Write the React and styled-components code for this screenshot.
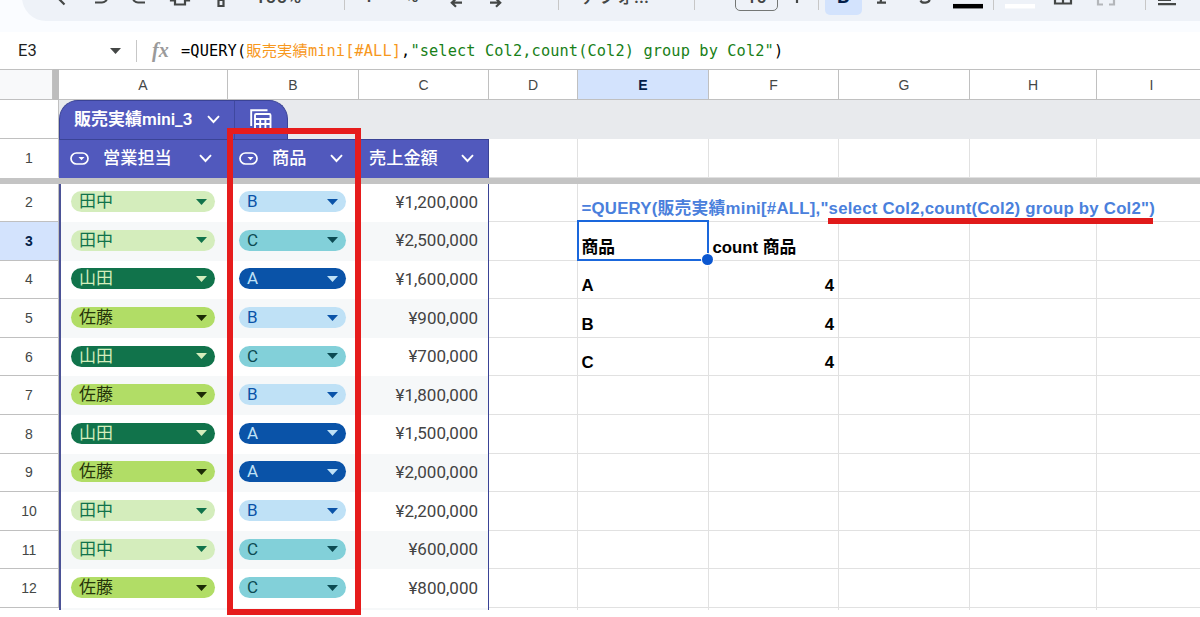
import React from 'react';
import styled, { createGlobalStyle, css } from 'styled-components';

const GlobalStyle = createGlobalStyle`
  *, *::before, *::after { box-sizing: border-box; }
  html, body { margin: 0; padding: 0; background: #fff; overflow: hidden; }
`;

const Page = styled.div`
  width: 1200px;
  height: 617px;
  overflow: hidden;
  position: relative;
  background: #fff;
  font-family: Roboto, "Noto Sans CJK JP", sans-serif;
`;

const ToolbarArea = styled.div`
  height: 32px;
  overflow: hidden;
  padding-left: 22px;
  background: #fafcff;
`;

const Toolbar = styled.div`
  display: flex;
  align-items: center;
  width: 1230px;
  height: 48px;
  margin-top: -27px;
  padding-left: 22px;
  border-radius: 24px;
  background: #eef2f8;
`;

const Tool = styled.div`
  flex: none;
  display: flex;
  align-items: center;
  justify-content: center;
  width: ${(p) => p.$w}px;
  height: 36px;
  padding-bottom: ${(p) => p.$lift || 0}px;
  border-radius: 5px;
  background: ${(p) => (p.$active ? '#d3e3fd' : 'transparent')};
  color: ${(p) => (p.$active ? '#041e49' : '#444746')};
  font-size: ${(p) => p.$size || 18}px;
  font-weight: ${(p) => (p.$bold ? 700 : 500)};
  white-space: nowrap;
`;

const Gap = styled.div`
  flex: none;
  width: ${(p) => p.$w}px;
`;

const Rule = styled.div`
  flex: none;
  width: 1px;
  height: 25px;
  background: #c7c7c7;
`;

const SizeBox = styled.div`
  flex: none;
  display: flex;
  align-items: center;
  justify-content: center;
  width: 43px;
  height: 28px;
  padding-bottom: 2px;
  border: 1px solid #747775;
  border-radius: 5px;
  color: #444746;
  font-size: 18px;
  font-weight: 500;
`;

const FormulaBar = styled.div`
  display: flex;
  align-items: center;
  height: 37px;
  padding-left: 18px;
`;

const NameBox = styled.div`
  display: flex;
  align-items: center;
  justify-content: space-between;
  width: 119px;
  height: 22px;
  padding-right: 15px;
  border-right: 1px solid #c7c7c7;
  font-size: 16.5px;
  color: #1f1f1f;
`;

const Fx = styled.div`
  width: 29px;
  margin: 0 0 0 15px;
  font: italic 700 20px "Liberation Serif", serif;
  color: #9a9a9a;
`;

const Formula = styled.div`
  font-family: "DejaVu Sans Mono", "Noto Sans CJK JP", monospace;
  font-size: 15.3px;
  line-height: 22px;
  letter-spacing: 0.11px;
  white-space: pre;
  color: #000;
`;

const Tint = styled.span`
  color: ${(p) => p.$c};
`;

const columns = '53px 6px 169px 131px 130px 89px 131px 130px 131px 127px 110px';

const Row = styled.div`
  display: grid;
  grid-template-columns: ${columns};
  width: 1207px;
  height: ${(p) => p.$h}px;
`;

const ColHead = styled.div`
  display: flex;
  align-items: center;
  justify-content: center;
  border: solid #c0c0c0;
  border-width: 1px 1px 1px 0;
  background: ${(p) => (p.$on ? '#d3e3fd' : p.$corner ? '#f8f9fa' : '#fff')};
  color: ${(p) => (p.$on ? '#041e49' : '#444746')};
  font: ${(p) => (p.$on ? 700 : 400)} 14px "Liberation Sans", sans-serif;
`;

const RowHead = styled.div`
  grid-column: 1 / 3;
  display: flex;
  align-items: center;
  justify-content: center;
  border-right: 1px solid #c0c0c0;
  border-bottom: 1px solid ${(p) => (p.$frozen ? '#fff' : '#c0c0c0')};
  background: ${(p) => (p.$on ? '#d3e3fd' : '#fff')};
  color: ${(p) => (p.$on ? '#041e49' : '#444746')};
  font: ${(p) => (p.$on ? 700 : 400)} 14px "Liberation Sans", sans-serif;
`;

const FreezeV = styled.div`
  background: #bdbdbd;
`;

const FreezeH = styled.div`
  height: 6px;
  background: #c4c4c4;
`;

const Cell = styled.div`
  display: flex;
  align-items: flex-end;
  justify-content: ${(p) => (p.$right ? 'flex-end' : 'flex-start')};
  grid-column: span ${(p) => p.$span || 1};
  padding: 0 4px 0 3.5px;
  border: solid #e1e1e1;
  border-width: 0 1px ${(p) => (p.$stub ? 0 : 1)}px 0;
  color: ${(p) => p.$color || '#000'};
  font: 700 16.8px/24px "Liberation Sans", "Noto Sans CJK JP", sans-serif;
  letter-spacing: ${(p) => p.$ls || 0}px;
  white-space: nowrap;
  position: relative;
`;

const TabRow = styled(Row)`
  background: linear-gradient(to right, #fff 59px, #e8eaed 59px);
`;

const TableTab = styled.div`
  grid-column: 3 / 5;
  display: flex;
  width: 229px;
  border: 1px solid #3a4396;
  border-bottom: 0;
  border-radius: 19px 19px 0 0;
  background: #5159bd;
  color: #fff;
`;

const TabName = styled.div`
  display: flex;
  align-items: center;
  justify-content: space-between;
  width: 175px;
  padding: 0 14px 4px 14px;
  border-right: 1px solid #3f489f;
  font-size: 17px;
  font-weight: 600;
  white-space: nowrap;

  svg {
    margin-top: 4px;
  }
`;

const TabIcon = styled.div`
  display: flex;
  flex: 1;
  align-items: center;
  justify-content: center;
`;

const HeaderCell = styled.div`
  display: flex;
  align-items: center;
  padding: 0 ${(p) => p.$pr}px 4px ${(p) => p.$pl}px;
  border-top: 1px solid #3a4396;
  ${(p) => p.$last && css`border-right: 1px solid #3a4396;`}
  background: #5159bd;
  color: #fff;
  font-size: 17.2px;
  font-weight: 500;
  white-space: nowrap;

  svg {
    margin-top: 3px;
  }
`;

const HeaderText = styled.span`
  flex: 1;
  margin-left: ${(p) => p.$ml}px;
`;

const DataCell = styled.div`
  display: flex;
  align-items: center;
  justify-content: ${(p) => (p.$money ? 'flex-end' : 'flex-start')};
  padding: 0 ${(p) => (p.$money ? 10 : 11)}px 2px;
  background: ${(p) => (p.$alt ? '#f6f8f9' : '#fff')};
  ${(p) => p.$first && css`border-left: 2px solid #4b5296; padding-left: 10px;`}
  ${(p) => p.$money && css`border-right: 1px solid #3a4396;`}
  color: #434343;
  font-size: 17px;
`;

const Chip = styled.div`
  display: flex;
  align-items: center;
  justify-content: space-between;
  width: ${(p) => p.$w}px;
  height: 21px;
  padding: 0 8px;
  border-radius: 11px;
  background: ${(p) => p.$bg};
  color: ${(p) => p.$fg};
  font-size: 17px;
  line-height: 21px;
`;

const Selection = styled.div`
  position: absolute;
  left: -1px;
  top: -2px;
  right: -1px;
  bottom: -1px;
  border: 2px solid #1a67dc;
  &::after {
    content: '';
    position: absolute;
    right: -6px;
    bottom: -6px;
    width: 11px;
    height: 11px;
    border-radius: 50%;
    background: #0b57d0;
    box-shadow: 0 0 0 1px #fff;
    z-index: 2;
  }
`;

const SelectedCell = styled(Cell)`
  z-index: 1;
`;

const HighlightBox = styled.div`
  position: absolute;
  z-index: 3;
  left: 227px;
  top: 128px;
  width: 134px;
  height: 487px;
  border: 6px solid #e61c1c;
`;

const Underline = styled.div`
  position: absolute;
  z-index: 3;
  left: 828px;
  top: 218px;
  width: 325px;
  height: 6px;
  background: #e01a1a;
`;

const Caret = ({ color = '#444746' }) => (
  <svg width="11" height="6" viewBox="0 0 11 6"><path d="M0 0h11L5.5 6z" fill={color} /></svg>
);
const Chevron = () => (
  <svg width="13" height="9" viewBox="0 0 13 9"><path d="M1 1.2l5.5 5.8L12 1.2" fill="none" stroke="#fff" strokeWidth="1.9" /></svg>
);
const DropdownType = () => (
  <svg width="19" height="13" viewBox="0 0 19 13">
    <rect x="1" y="1" width="17" height="11" rx="5.5" fill="none" stroke="#fff" strokeWidth="1.7" />
    <path d="M8.5 5h6l-3 3.2z" fill="#fff" />
  </svg>
);
const TableIcon = () => (
  <svg width="22" height="22" viewBox="0 0 22 22" fill="none" stroke="#fff" strokeWidth="1.9">
    <path d="M1.200 17V1.200H17.500" />
    <rect x="5" y="5" width="15.500" height="15.500" rx="1.200" />
    <path d="M5 10h15.500M5 15h15.500M10.200 10v10.500M15.400 10v10.500" />
  </svg>
);
const Icon = ({ children, w = 24, c = '#444746' }) => (
  <svg width={w} height="24" viewBox={`0 0 ${w} 24`} fill="none" stroke={c} strokeWidth="2.2">{children}</svg>
);

const NAMES = {
  田中: ['#d4edbc', '#11734b', '#11734b'],
  山田: ['#11734b', '#d4edbc', '#d4edbc'],
  佐藤: ['#b1dd66', '#26350a', '#1c2b05'],
};
const GOODS = {
  A: ['#0a53a8', '#bfe1f6'],
  B: ['#bfe1f6', '#0a53a8'],
  C: ['#82d0d9', '#0b4a52'],
};

const rows = [
  ['田中', 'B', '¥1,200,000'],
  ['田中', 'C', '¥2,500,000'],
  ['山田', 'A', '¥1,600,000'],
  ['佐藤', 'B', '¥900,000'],
  ['山田', 'C', '¥700,000'],
  ['佐藤', 'B', '¥1,800,000'],
  ['山田', 'A', '¥1,500,000'],
  ['佐藤', 'A', '¥2,000,000'],
  ['田中', 'B', '¥2,200,000'],
  ['田中', 'C', '¥600,000'],
  ['佐藤', 'C', '¥800,000'],
];

const results = {
  3: ['商品', 'count 商品'],
  4: ['A', '4'],
  5: ['B', '4'],
  6: ['C', '4'],
};

function SheetCells({ n }) {
  if (n === 2) {
    return (
      <>
        <Cell />
        <Cell $span={5} $color="#4a80dc" $ls={0.23}>=QUERY(販売実績mini[#ALL],"select Col2,count(Col2) group by Col2")</Cell>
      </>
    );
  }
  const [e, f] = results[n] || [];
  return (
    <>
      <Cell />
      {n === 3 ? <SelectedCell>{e}<Selection /></SelectedCell> : <Cell>{e}</Cell>}
      <Cell $right={n > 3}>{f}</Cell>
      <Cell /><Cell /><Cell />
    </>
  );
}

export default function App() {
  return (
    <Page>
      <GlobalStyle />
      <ToolbarArea>
        <Toolbar>
          <Tool $w={24}><Icon><circle cx="9" cy="8" r="6" /><path d="M12.500 11.500l8 8" /></Icon></Tool>
          <Gap $w={20} />
          <Tool $w={24}><Icon><path d="M7 17.500h7a5 5 0 0 0 0-10H4M8 3L4 7.500l4 4.500" /></Icon></Tool>
          <Gap $w={15} />
          <Tool $w={24}><Icon><path d="M18 17.500h-7a5 5 0 0 1 0-10h10M17 3l4 4.500l-4 4.500" /></Icon></Tool>
          <Gap $w={17} />
          <Tool $w={24}><Icon><path d="M7 15.500H3V8h18v7.500h-4M7 13h10v6.500H7zM7 8V3h10v5" /></Icon></Tool>
          <Gap $w={17} />
          <Tool $w={24}><Icon><path d="M4 3h14v6H4zM18 6h3v6h-9v3M9.500 15h5v6h-5z" /></Icon></Tool>
          <Gap $w={20} />
          <Tool $w={50} $size={19} $lift={1}>100%</Tool>
          <Gap $w={41} />
          <Rule />
          <Gap $w={14} />
          <Tool $w={20} $lift={4}>¥</Tool>
          <Gap $w={21} />
          <Tool $w={24} $lift={4}>%</Tool>
          <Gap $w={20} />
          <Tool $w={24}><Icon><path d="M18 17.700H8M12 13.700l-4.200 4L12 21.700" /></Icon></Tool>
          <Gap $w={16} />
          <Tool $w={24}><Icon><path d="M6 17.700h10M12 13.700l4.200 4L12 21.700" /></Icon></Tool>
          <Gap $w={14} />
          <Tool $w={36} $lift={7}>123</Tool>
          <Rule />
          <Gap $w={18} />
          <Tool $w={75} $lift={5}>デフォ...</Tool>
          <Gap $w={42} />
          <Rule />
          <Gap $w={40} />
          <SizeBox>10</SizeBox>
          <Gap $w={7} />
          <Tool $w={24}><Icon><path d="M12 9v9M7.500 13.500h9" /></Icon></Tool>
          <Gap $w={9} />
          <Rule />
          <Gap $w={6} />
          <Tool $w={37} $active $bold $size={20} $lift={2}>B</Tool>
          <Gap $w={8} />
          <Tool $w={24}><Icon><path d="M12.500 5l-2 13M8 5h9M7 17.700h9" /></Icon></Tool>
          <Gap $w={19} />
          <Tool $w={24}><Icon><path d="M16.500 7c-1-2-8-3-8 1c0 3 8 3 8 6.500s-7.500 4.500-9 1" /></Icon></Tool>
          <Gap $w={16} />
          <Tool $w={30}><Icon w={30} c="#000"><path d="M0 21.200h30" strokeWidth="4.500" /></Icon></Tool>
          <Gap $w={10} />
          <Rule />
          <Gap $w={11} />
          <Tool $w={30}><Icon w={30} c="#fff"><path d="M0 21.200h30" strokeWidth="4.500" /></Icon></Tool>
          <Gap $w={16} />
          <Tool $w={24}><Icon><path d="M4 3h16v15.500H4zM12 3v15.500M4 11h16" /></Icon></Tool>
          <Gap $w={19} />
          <Tool $w={24}><Icon c="#b3b6ba"><path d="M4 8V3h5M15 3h5v5M4 14v5.500h5M15 19.500h5V14" /></Icon></Tool>
          <Gap $w={27} />
          <Rule />
          <Gap $w={9} />
          <Tool $w={24}><Icon><path d="M3 10h18M3 15h13M3 19.200h18" /></Icon></Tool>
        </Toolbar>
      </ToolbarArea>
      <FormulaBar>
        <NameBox>E3<Caret /></NameBox>
        <Fx>fx</Fx>
        <Formula>=QUERY(<Tint $c="#f7981d">販売実績mini[#ALL]</Tint>,<Tint $c="#188018">"select Col2,count(Col2) group by Col2"</Tint>)</Formula>
      </FormulaBar>
      <Row $h={31}>
        <ColHead $corner />
        <FreezeV />
        {'ABCDEFGHI'.split('').map((c) => <ColHead key={c} $on={c === 'E'}>{c}</ColHead>)}
      </Row>
      <TabRow $h={38.5}>
        <RowHead />
        <TableTab>
          <TabName>販売実績mini_3<Chevron /></TabName>
          <TabIcon><TableIcon /></TabIcon>
        </TableTab>
      </TabRow>
      <Row $h={39}>
        <RowHead $frozen>1</RowHead>
        <HeaderCell $pl={11} $pr={16}><DropdownType /><HeaderText $ml={14}>営業担当</HeaderText><Chevron /></HeaderCell>
        <HeaderCell $pl={11} $pr={16}><DropdownType /><HeaderText $ml={14}>商品</HeaderText><Chevron /></HeaderCell>
        <HeaderCell $pl={10} $pr={14} $last><HeaderText $ml={0}>売上金額</HeaderText><Chevron /></HeaderCell>
        <Cell /><Cell /><Cell /><Cell /><Cell /><Cell />
      </Row>
      <FreezeH />
      {rows.map(([name, good, price], i) => {
        const n = i + 2;
        const alt = i % 2 === 1;
        const [bg, fg, arrow] = NAMES[name];
        const [gbg, gfg] = GOODS[good];
        return (
          <Row key={n} $h={38.6}>
            <RowHead $on={n === 3}>{n}</RowHead>
            <DataCell $alt={alt} $first><Chip $w={144} $bg={bg} $fg={fg}>{name}<Caret color={arrow} /></Chip></DataCell>
            <DataCell $alt={alt}><Chip $w={107} $bg={gbg} $fg={gfg}>{good}<Caret color={gfg} /></Chip></DataCell>
            <DataCell $alt={alt} $money>{price}</DataCell>
            <SheetCells n={n} />
          </Row>
        );
      })}
      <Row $h={2}>
        <Gap $w={53} /><Gap $w={6} />
        <DataCell $alt $first /><DataCell $alt /><DataCell $alt $money />
        <Cell $stub /><Cell $stub /><Cell $stub /><Cell $stub /><Cell $stub /><Cell $stub />
      </Row>
      <HighlightBox />
      <Underline />
    </Page>
  );
}
